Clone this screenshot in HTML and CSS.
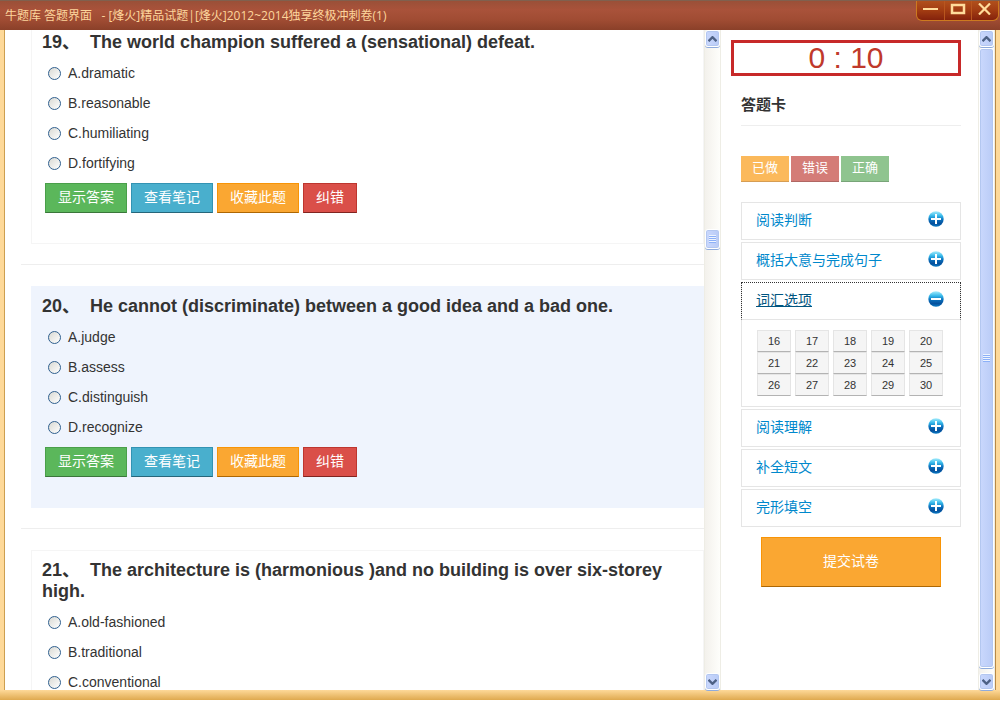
FILE: index.html
```
<!DOCTYPE html>
<html lang="zh-CN">
<head>
    <meta charset="UTF-8">
    <meta name="viewport" content="width=device-width, initial-scale=1.0">
    <title>牛题库 答题界面</title>
    <link rel="stylesheet" href="styles.css">
</head>
<body>
    <svg width="0" height="0" class="defs" aria-hidden="true">
        <defs>
            <linearGradient id="ball" x1="0" y1="0" x2="0" y2="1">
                <stop offset="0" stop-color="#a5ecfc"></stop>
                <stop offset="0.3" stop-color="#35b8ea"></stop>
                <stop offset="0.55" stop-color="#0a70bd"></stop>
                <stop offset="0.8" stop-color="#05509c"></stop>
                <stop offset="1" stop-color="#0a7cc6"></stop>
            </linearGradient>
            <symbol id="icon-plus" viewBox="0 0 16 16">
                <circle cx="8" cy="8" r="7.7" fill="url(#ball)"></circle>
                <path d="M8 3v10M3 8h10" stroke="#fff" stroke-width="2"></path>
            </symbol>
            <symbol id="icon-minus" viewBox="0 0 16 16">
                <circle cx="8" cy="8" r="7.7" fill="url(#ball)"></circle>
                <path d="M3 8h10" stroke="#fff" stroke-width="2"></path>
            </symbol>
            <symbol id="icon-up" viewBox="0 0 9 6">
                <path d="M0.500 5.200l4-4 4 4" fill="none" stroke="#4d6185" stroke-width="2.400"></path>
            </symbol>
            <symbol id="icon-down" viewBox="0 0 9 6">
                <path d="M0.500 0.800l4 4 4-4" fill="none" stroke="#4d6185" stroke-width="2.400"></path>
            </symbol>
        </defs>
    </svg>

    <div class="window">
        <header class="title-bar">
            <h1>牛题库 答题界面 &nbsp;&nbsp;- [烽火]精品试题|[烽火]2012~2014独享终极冲刺卷(1)</h1>
            <div class="window-buttons">
                <button type="button" aria-label="最小化"><svg width="16" height="12" viewBox="0 0 16 12"><path d="M0 6h15" stroke="#ffdc9b" stroke-width="2"></path></svg></button>
                <button type="button" aria-label="最大化"><svg width="16" height="12" viewBox="0 0 16 12"><path d="M2 2h12v8h-12z" fill="none" stroke="#ffdc9b" stroke-width="2.500"></path></svg></button>
                <button type="button" aria-label="关闭"><svg width="14" height="12" viewBox="0 0 14 12"><path d="M1 0.500l11 11M12 0.500l-11 11" stroke="#ffdc9b" stroke-width="2.200"></path></svg></button>
            </div>
        </header>

        <div class="main">
            <div class="questions">
                <section class="question">
                    <h4>19、&nbsp; The world champion suffered a (sensational) defeat.</h4>
                    <label><input type="radio" name="q19">A.dramatic</label>
                    <label><input type="radio" name="q19">B.reasonable</label>
                    <label><input type="radio" name="q19">C.humiliating</label>
                    <label><input type="radio" name="q19">D.fortifying</label>
                    <div class="actions">
                        <button type="button" class="btn green">显示答案</button>
                        <button type="button" class="btn blue">查看笔记</button>
                        <button type="button" class="btn orange">收藏此题</button>
                        <button type="button" class="btn red">纠错</button>
                    </div>
                </section>
                <hr>
                <section class="question current">
                    <h4>20、&nbsp; He cannot (discriminate) between a good idea and a bad one.</h4>
                    <label><input type="radio" name="q20">A.judge</label>
                    <label><input type="radio" name="q20">B.assess</label>
                    <label><input type="radio" name="q20">C.distinguish</label>
                    <label><input type="radio" name="q20">D.recognize</label>
                    <div class="actions">
                        <button type="button" class="btn green">显示答案</button>
                        <button type="button" class="btn blue">查看笔记</button>
                        <button type="button" class="btn orange">收藏此题</button>
                        <button type="button" class="btn red">纠错</button>
                    </div>
                </section>
                <hr>
                <section class="question">
                    <h4>21、&nbsp; The architecture is (harmonious )and no building is over six-storey high.</h4>
                    <label><input type="radio" name="q21">A.old-fashioned</label>
                    <label><input type="radio" name="q21">B.traditional</label>
                    <label><input type="radio" name="q21">C.conventional</label>
                </section>
            </div>

            <div class="scrollbar" aria-hidden="true">
                <span class="arrow"><svg width="9" height="6"><use href="#icon-up"></use></svg></span>
                <span class="track upper"></span>
                <span class="thumb small"><i class="grip"></i></span>
                <span class="track lower"></span>
                <span class="arrow"><svg width="9" height="6"><use href="#icon-down"></use></svg></span>
            </div>

            <aside class="sidebar">
                <div class="timer">0 : 10</div>
                <div class="card">
                    <h2>答题卡</h2>
                    <div class="legend">
                        <span class="done">已做</span>
                        <span class="wrong">错误</span>
                        <span class="right">正确</span>
                    </div>
                    <div class="group">
                        <a href="#">阅读判断<svg width="16" height="16"><use href="#icon-plus"></use></svg></a>
                    </div>
                    <div class="group">
                        <a href="#">概括大意与完成句子<svg width="16" height="16"><use href="#icon-plus"></use></svg></a>
                    </div>
                    <div class="group open">
                        <a href="#"><u>词汇选项</u><svg width="16" height="16"><use href="#icon-minus"></use></svg></a>
                        <div class="numbers">
                            <button type="button">16</button>
                            <button type="button">17</button>
                            <button type="button">18</button>
                            <button type="button">19</button>
                            <button type="button">20</button>
                            <button type="button">21</button>
                            <button type="button">22</button>
                            <button type="button">23</button>
                            <button type="button">24</button>
                            <button type="button">25</button>
                            <button type="button">26</button>
                            <button type="button">27</button>
                            <button type="button">28</button>
                            <button type="button">29</button>
                            <button type="button">30</button>
                        </div>
                    </div>
                    <div class="group">
                        <a href="#">阅读理解<svg width="16" height="16"><use href="#icon-plus"></use></svg></a>
                    </div>
                    <div class="group">
                        <a href="#">补全短文<svg width="16" height="16"><use href="#icon-plus"></use></svg></a>
                    </div>
                    <div class="group">
                        <a href="#">完形填空<svg width="16" height="16"><use href="#icon-plus"></use></svg></a>
                    </div>
                    <button type="button" class="btn orange submit">提交试卷</button>
                </div>
            </aside>

            <div class="scrollbar" aria-hidden="true">
                <span class="arrow"><svg width="9" height="6"><use href="#icon-up"></use></svg></span>
                <span class="thumb tall"><i class="grip"></i></span>
                <span class="track end"></span>
                <span class="arrow"><svg width="9" height="6"><use href="#icon-down"></use></svg></span>
            </div>
        </div>
    </div>
</body>
</html>
```
FILE: styles.css
```
* {
    box-sizing: border-box;
}

body {
    margin: 0;
    padding: 0 1px 1px 0;
    height: 100vh;
    background-color: #fff;
    color: #333;
    font-family: "Liberation Sans", "Noto Sans CJK SC", sans-serif;
    font-size: 14px;
    overflow: hidden;
}

button {
    font-family: inherit;
    cursor: pointer;
}

.defs {
    position: absolute;
}

.window {
    display: flex;
    flex-direction: column;
    height: 100%;
    background: linear-gradient(to bottom, #fed999, #dfa94f) bottom / 100% 10px no-repeat #fed999;
}

/* title bar */
.title-bar {
    display: flex;
    justify-content: space-between;
    align-items: flex-start;
    flex: none;
    height: 30px;
    padding: 0 1px 0 5px;
    border-top: 1px solid #80604e;
    background: linear-gradient(to bottom, #9a5038, #a9523a 30%, #a04c33 65%, #8a4029);
}

.title-bar h1 {
    margin: 0;
    font-family: "Open Sans", "Noto Sans CJK SC", sans-serif;
    font-size: 12px;
    font-weight: normal;
    line-height: 29px;
    color: #fdd59c;
    white-space: nowrap;
}

.window-buttons {
    display: flex;
    height: 20px;
    border: 1px solid #cd7a1f;
    border-top: none;
    border-radius: 0 0 6px 6px;
    background: linear-gradient(to bottom, #b1501c, #a23c12 50%, #84220c);
}

.window-buttons button {
    display: flex;
    justify-content: center;
    align-items: center;
    width: 27px;
    padding: 0 0 3px;
    border: none;
    background: none;
}

.window-buttons button + button {
    border-left: 1px solid #b9561e;
}

/* page area */
.main {
    display: flex;
    flex: 1;
    min-height: 0;
    margin: 0 4px 10px;
    border-left: 1px solid #cd9f50;
    border-right: 1px solid #b98a45;
    background-color: #fff;
}

.questions {
    flex: 1;
    min-width: 0;
    padding-left: 16px;
    overflow: hidden;
}

.question {
    min-height: 222px;
    margin-left: 10px;
    padding: 9px 10px;
    border: 1px solid #f5f5f5;
}

/* the list is scrolled a little past the top of question 19 */
.question:first-child {
    margin-top: -8px;
}

.question.current {
    border-color: #eff4fd;
    background-color: #eff4fd;
}

.question h4 {
    margin: 0 0 5px;
    font-size: 18px;
    line-height: 21px;
}

.question label {
    display: flex;
    align-items: center;
    height: 30px;
    padding-left: 6px;
}

.question input {
    appearance: none;
    width: 13px;
    height: 13px;
    margin: 0 7px 0 0;
    border: 1px solid #2f5f8e;
    border-radius: 50%;
    background: linear-gradient(135deg, #d9d9d3, #fff);
}

hr {
    height: 1px;
    margin: 20px 0 21px;
    border: none;
    background-color: #eee;
}

.actions {
    display: flex;
    gap: 4px;
    padding: 5px 3px 0;
}

.btn {
    height: 30px;
    padding: 0 12px 4px;
    border: 1px solid;
    font-size: 14px;
    color: #fff;
}

.green {
    border-color: #4a9f4a #4a9f4a #3a763a;
    background-color: #5bb75b;
}

.blue {
    border-color: #3393b3 #3393b3 #26667a;
    background-color: #49afcd;
}

.orange {
    border-color: #f89406 #f89406 #ad6704;
    background-color: #faa732;
}

.red {
    border-color: #bd362f #bd362f #802420;
    background-color: #da4f49;
}

/* scrollbars */
.scrollbar {
    display: flex;
    flex-direction: column;
    flex: none;
    width: 17px;
    border-left: 1px solid #eeede5;
    border-right: 1px solid #eeede5;
    background: linear-gradient(to right, #f3f1ec, #fefefb);
}

.scrollbar .arrow,
.scrollbar .thumb {
    display: flex;
    justify-content: center;
    align-items: center;
    flex: none;
    border: 1px solid #fff;
    border-radius: 3px;
    background: linear-gradient(to right, #cad8fd, #b9cbf6);
    box-shadow: inset 0 0 0 1px #b3c7f0, 0 1px 0 #8fabdc;
}

.scrollbar .arrow {
    height: 17px;
}

.scrollbar .small {
    height: 20px;
}

.scrollbar .tall {
    flex: 1;
    margin-top: 1px;
}

.track.upper {
    flex: 182;
}

.track.lower {
    flex: 423;
}

.track.end {
    height: 5px;
}

.grip {
    width: 7px;
    height: 8px;
    background: repeating-linear-gradient(to bottom, #eef4fe 0, #eef4fe 1px, #8cb0f8 1px, #8cb0f8 2px);
}

/* answer card */
.sidebar {
    flex: none;
    width: 257px;
    padding: 10px 17px 0 10px;
    overflow: hidden;
}

.timer {
    height: 36px;
    border: 3px solid #c72929;
    font-size: 30px;
    line-height: 30px;
    text-align: center;
    color: #c0392b;
}

.card {
    padding-left: 10px;
}

.card h2 {
    margin: 0 0 30px;
    padding: 19px 0 10px;
    border-bottom: 1px solid #eee;
    font-size: 15px;
    line-height: 20px;
}

.legend {
    display: flex;
    gap: 2px;
    margin-bottom: 20px;
}

.legend span {
    width: 48px;
    height: 26px;
    border-bottom: 1px solid;
    font-size: 13px;
    line-height: 24px;
    text-align: center;
    color: #fff;
}

.legend .done {
    border-color: #d69d53;
    background-color: #fbb95b;
}

.legend .wrong {
    border-color: #b06763;
    background-color: #d47c77;
}

.legend .right {
    border-color: #78a478;
    background-color: #8fc48f;
}

.group {
    margin-bottom: 2px;
    border: 1px solid #e5e5e5;
}

.group a {
    display: flex;
    justify-content: space-between;
    align-items: center;
    height: 36px;
    padding: 0 16px 4px 14px;
    color: #0088cc;
    text-decoration: none;
}

.group.open {
    border-top: none;
}

.group.open a {
    height: 38px;
    margin: 0 -1px;
    border: 1px dotted #333;
    border-bottom: 1px solid #e5e5e5;
    color: #005580;
}

.numbers {
    display: grid;
    grid-template-columns: repeat(5, 34px);
    gap: 0 4px;
    padding: 10px 15px;
}

.numbers button {
    height: 22px;
    padding: 0;
    border: 1px solid #e5e5e5;
    border-bottom-color: #b3b3b3;
    background-color: #f5f5f5;
    font-size: 11px;
    color: #333;
}

.submit {
    display: block;
    width: 180px;
    height: 50px;
    margin: 10px auto 0;
}
```
